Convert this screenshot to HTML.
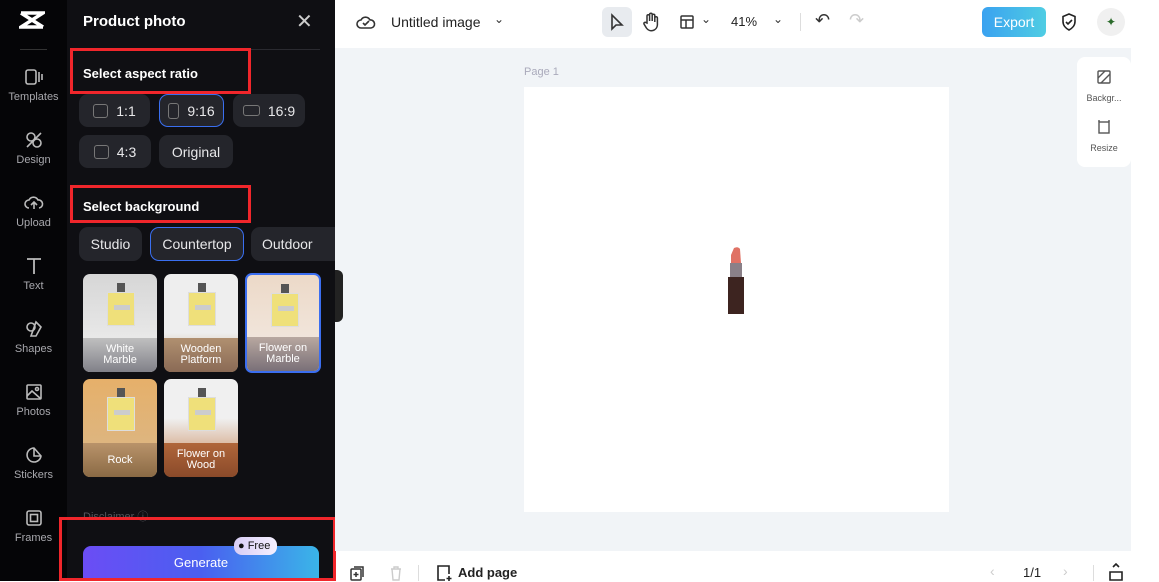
<!DOCTYPE html>
<html><head><style>
*{margin:0;padding:0;box-sizing:border-box}
body{width:1159px;height:581px;overflow:hidden;font-family:"Liberation Sans",sans-serif;background:#fff;position:relative}
.abs{position:absolute}
.rail{left:0;top:0;width:67px;height:581px;background:#050507}
.ri{position:absolute;left:0;width:67px;text-align:center;color:#a8a8ad;font-size:11px}
.ri svg{display:block;margin:0 auto 4px}
.panel{left:67px;top:0;width:268px;height:581px;background:#0f0f13;color:#fff}
.btn{position:absolute;background:#24252b;border-radius:9px;color:#e8e8ea;font-size:14px;display:flex;align-items:center;justify-content:center;gap:8px}
.sel{border:1.5px solid #3a6ff0}
.red{position:absolute;border:3px solid #f0262b}
.th{position:absolute;width:74px;height:98px;border-radius:7px;overflow:hidden}
.th .lbl{position:absolute;bottom:0;left:0;right:0;height:34px;color:#fff;font-size:11px;text-align:center;line-height:11px;display:flex;align-items:center;justify-content:center;background:rgba(120,100,90,.55)}
.bottle{position:absolute;left:24px;top:18px;width:28px;height:34px;background:#efe07a;border:1px solid #ddd;}
.bottle:before{content:"";position:absolute;left:9px;top:-10px;width:8px;height:9px;background:#555}
.bottle:after{content:"";position:absolute;left:6px;top:12px;width:16px;height:5px;background:#ccc}
</style></head><body>
<div class="abs rail">
  <svg class="abs" style="left:19px;top:10px" width="26" height="20" viewBox="0 0 26 20"><path d="M2 3h22L2 17h22M2 3l22 14" stroke="#fff" stroke-width="3.5" fill="none"/></svg>
  <div class="abs" style="left:20px;top:49px;width:27px;height:1px;background:#333"></div>
  <div class="ri" style="top:67px"><svg width="20" height="20" viewBox="0 0 20 20" fill="none" stroke="#bbb" stroke-width="1.6"><rect x="2" y="3" width="10" height="14" rx="2"/><path d="M15 5v10M18 7v6"/></svg>Templates</div>
  <div class="ri" style="top:130px"><svg width="20" height="20" viewBox="0 0 20 20" fill="none" stroke="#bbb" stroke-width="1.6"><circle cx="7" cy="7" r="4"/><circle cx="13" cy="13" r="4"/><path d="M3 17L17 3"/></svg>Design</div>
  <div class="ri" style="top:193px"><svg width="20" height="20" viewBox="0 0 20 20" fill="none" stroke="#bbb" stroke-width="1.6"><path d="M5 15a4 4 0 010-8 5 5 0 019 0 4 4 0 011 8M10 9v7M7 12l3-3 3 3"/></svg>Upload</div>
  <div class="ri" style="top:256px"><svg width="20" height="20" viewBox="0 0 20 20" fill="none" stroke="#bbb" stroke-width="1.8"><path d="M3 3h14M10 3v15"/></svg>Text</div>
  <div class="ri" style="top:319px"><svg width="20" height="20" viewBox="0 0 20 20" fill="none" stroke="#bbb" stroke-width="1.6"><circle cx="7" cy="8" r="4"/><path d="M12 3l5 5-5 9H7z"/></svg>Shapes</div>
  <div class="ri" style="top:382px"><svg width="20" height="20" viewBox="0 0 20 20" fill="none" stroke="#bbb" stroke-width="1.6"><rect x="3" y="3" width="14" height="14" rx="1"/><path d="M3 14l5-5 9 8"/><circle cx="13" cy="7" r="1.5"/></svg>Photos</div>
  <div class="ri" style="top:445px"><svg width="20" height="20" viewBox="0 0 20 20" fill="none" stroke="#bbb" stroke-width="1.6"><path d="M17 11A7 7 0 1110 3l7 8zM10 3v8h7"/></svg>Stickers</div>
  <div class="ri" style="top:508px"><svg width="20" height="20" viewBox="0 0 20 20" fill="none" stroke="#bbb" stroke-width="1.6"><rect x="3" y="3" width="14" height="14" rx="2"/><rect x="6.5" y="6.5" width="7" height="7"/></svg>Frames</div>
</div>
<div class="abs panel">
  <div class="abs" style="left:16px;top:13px;font-size:15px;font-weight:bold">Product photo</div>
  <div class="abs" style="left:229px;top:9px;font-size:20px;color:#ccc">✕</div>
  <div class="abs" style="left:3px;top:49px;width:250px;height:1px;background:#2a2a30"></div>
  <div class="abs" style="left:16px;top:66px;font-size:13px;font-weight:bold">Select aspect ratio</div>
  <div class="btn" style="left:12px;top:94px;width:71px;height:33px"><span style="width:15px;height:14px;border:1.5px solid #777;border-radius:3px"></span>1:1</div>
  <div class="btn sel" style="left:92px;top:94px;width:65px;height:33px"><span style="width:11px;height:16px;border:1.5px solid #777;border-radius:3px"></span>9:16</div>
  <div class="btn" style="left:166px;top:94px;width:72px;height:33px"><span style="width:17px;height:11px;border:1.5px solid #777;border-radius:3px"></span>16:9</div>
  <div class="btn" style="left:12px;top:135px;width:72px;height:33px"><span style="width:15px;height:14px;border:1.5px solid #777;border-radius:3px"></span>4:3</div>
  <div class="btn" style="left:92px;top:135px;width:74px;height:33px">Original</div>
  <div class="abs" style="left:16px;top:199px;font-size:13px;font-weight:bold">Select background</div>
  <div class="btn" style="left:12px;top:227px;width:63px;height:34px">Studio</div>
  <div class="btn sel" style="left:83px;top:227px;width:94px;height:34px">Countertop</div>
  <div class="btn" style="left:184px;top:227px;width:84px;height:34px;justify-content:flex-start;padding-left:11px;border-radius:9px 0 0 9px">Outdoor</div>
  <div class="th" style="left:16px;top:274px;background:linear-gradient(#d6d6d6,#f2f2f2)"><div class="bottle"></div><div class="lbl" style="background:linear-gradient(rgba(150,150,150,.5),#808088)">White<br>Marble</div></div>
  <div class="th" style="left:97px;top:274px;background:linear-gradient(#eee 60%,#c9a67a)"><div class="bottle"></div><div class="lbl" style="background:linear-gradient(#b09070,#8a6a55)">Wooden<br>Platform</div></div>
  <div class="th" style="left:178px;top:273px;width:76px;height:100px;border:2px solid #3b6ef0;background:linear-gradient(#ecd9c8,#f3ebe4)"><div class="bottle"></div><div class="lbl" style="background:linear-gradient(#b8a8a0,#7a7078)">Flower on<br>Marble</div></div>
  <div class="th" style="left:16px;top:379px;background:linear-gradient(#e6b06a,#d9b88a)"><div class="bottle"></div><div class="lbl" style="background:linear-gradient(#b9936a,#8a6a45)">Rock</div></div>
  <div class="th" style="left:97px;top:379px;background:linear-gradient(#f0f0f0 40%,#c27a45)"><div class="bottle"></div><div class="lbl" style="background:linear-gradient(#b0663a,#8a4a2a)">Flower on<br>Wood</div></div>
  <div class="abs" style="left:16px;top:508px;font-size:11px;color:#55555b">Disclaimer ⓘ</div>
  <div class="abs" style="left:16px;top:546px;width:236px;height:35px;border-radius:8px 8px 0 0;background:linear-gradient(90deg,#6b4df5,#4a5ff0 50%,#3ab5e8);font-size:13px;text-align:center;line-height:33px">Generate</div>
  <div class="abs" style="left:167px;top:537px;width:43px;height:18px;border-radius:8px;background:linear-gradient(90deg,#d8cdf5,#f5f0ff);color:#111;font-size:11px;line-height:18px;padding-left:4px">● Free</div>
</div>
<div class="red" style="left:70px;top:48px;width:181px;height:46px"></div>
<div class="red" style="left:70px;top:185px;width:181px;height:38px"></div>
<div class="red" style="left:59px;top:517px;width:277px;height:64px"></div>
<div class="abs" style="left:335px;top:48px;width:796px;height:503px;background:#f1f4f7"></div>
<div class="abs" style="left:335px;top:270px;width:8px;height:52px;background:#222;border-radius:0 6px 6px 0"></div>
<div class="abs" style="left:524px;top:66px;font-size:11px;color:#aab">Page 1</div>
<div class="abs" style="left:524px;top:87px;width:425px;height:425px;background:#fff"></div>
<svg class="abs" style="left:725px;top:245px" width="22" height="70" viewBox="0 0 22 70"><path d="M6 10 L9 3 Q13 1 15 4 L16 18 H6z" fill="#e07265"/><rect x="5" y="18" width="12" height="14" fill="#8a8088"/><rect x="3" y="32" width="16" height="37" fill="#3d2420"/></svg>
<div class="abs" style="left:1077px;top:57px;width:54px;height:110px;background:#fff;border-radius:8px;font-size:9px;color:#555;text-align:center">
  <svg style="margin-top:12px" width="16" height="16" viewBox="0 0 16 16" fill="none" stroke="#555" stroke-width="1.4"><rect x="2" y="2" width="12" height="12" rx="1"/><path d="M2 9l7-7M5 14l9-9"/></svg>
  <div style="margin-top:6px">Backgr...</div>
  <svg style="margin-top:16px" width="16" height="16" viewBox="0 0 16 16" fill="none" stroke="#555" stroke-width="1.4"><rect x="3" y="3" width="10" height="11"/><path d="M3 1v2M13 1v2"/></svg>
  <div style="margin-top:6px">Resize</div>
</div>
<svg class="abs" style="left:356px;top:13px" width="20" height="18" viewBox="0 0 20 18" fill="none" stroke="#333" stroke-width="1.6"><path d="M5 15a4 4 0 010-8 5 5 0 019 0 4 4 0 011 8z"/><path d="M7 10l2 2 4-4"/></svg>
<div class="abs" style="left:391px;top:14px;font-size:14px;color:#222">Untitled image</div>
<div class="abs" style="left:494px;top:12px;font-size:12px;color:#333">⌄</div>
<div class="abs" style="left:602px;top:7px;width:30px;height:30px;background:#e8ebef;border-radius:6px"></div>
<svg class="abs" style="left:609px;top:13px" width="16" height="18" viewBox="0 0 16 18" fill="none" stroke="#333" stroke-width="1.6"><path d="M3 2v14l4-4h6z"/></svg>
<svg class="abs" style="left:642px;top:12px" width="18" height="20" viewBox="0 0 18 20" fill="none" stroke="#333" stroke-width="1.5"><path d="M5 11V4a1.3 1.3 0 012.6 0v5V2.5a1.3 1.3 0 012.6 0V9V3.5a1.3 1.3 0 012.6 0V10V6a1.3 1.3 0 012.6 0v7a6 6 0 01-11 3L2 12a1.3 1.3 0 012.2-1.3z"/></svg>
<svg class="abs" style="left:679px;top:14px" width="16" height="16" viewBox="0 0 16 16" fill="none" stroke="#333" stroke-width="1.5"><rect x="2" y="2" width="12" height="12" rx="1"/><path d="M2 6h12M7 6v8"/></svg>
<div class="abs" style="left:701px;top:12px;font-size:12px;color:#333">⌄</div>
<div class="abs" style="left:731px;top:14px;font-size:13px;color:#222">41%</div>
<div class="abs" style="left:773px;top:12px;font-size:12px;color:#333">⌄</div>
<div class="abs" style="left:800px;top:13px;width:1px;height:18px;background:#ddd"></div>
<div class="abs" style="left:815px;top:10px;font-size:18px;color:#333">↶</div>
<div class="abs" style="left:849px;top:10px;font-size:18px;color:#ccc">↷</div>
<div class="abs" style="left:982px;top:7px;width:64px;height:30px;border-radius:6px;background:linear-gradient(90deg,#3aa2f0,#4fcde3);color:#fff;font-size:14px;text-align:center;line-height:30px">Export</div>
<svg class="abs" style="left:1060px;top:12px" width="18" height="20" viewBox="0 0 18 20" fill="none" stroke="#222" stroke-width="1.6"><path d="M9 2l6 2.5v5c0 4-3 7-6 8.5-3-1.5-6-4.5-6-8.5v-5z"/><path d="M6 10l2 2 4-4"/></svg>
<div class="abs" style="left:1097px;top:8px;width:28px;height:28px;border-radius:50%;background:#f0f0f0;color:#2a6a2a;text-align:center;line-height:28px;font-size:12px">✦</div>
<svg class="abs" style="left:349px;top:565px" width="16" height="16" viewBox="0 0 16 16" fill="none" stroke="#333" stroke-width="1.5"><rect x="2" y="4" width="10" height="11" rx="1"/><path d="M5 2h9v10M7 7v5M4.5 9.5h5"/></svg>
<svg class="abs" style="left:389px;top:565px" width="14" height="16" viewBox="0 0 14 16" fill="none" stroke="#ccc" stroke-width="1.4"><path d="M2 4h10M5 4V2h4v2M3 4l1 11h6l1-11"/></svg>
<div class="abs" style="left:418px;top:565px;width:1px;height:16px;background:#ddd"></div>
<svg class="abs" style="left:435px;top:564px" width="18" height="18" viewBox="0 0 18 18" fill="none" stroke="#222" stroke-width="1.6"><path d="M10 16H3V2h11v8M14 12v5M11.5 14.5h5"/></svg>
<div class="abs" style="left:458px;top:565px;font-size:13px;color:#222;font-weight:bold">Add page</div>
<div class="abs" style="left:990px;top:563px;font-size:14px;color:#ccc">‹</div>
<div class="abs" style="left:1023px;top:565px;font-size:13px;color:#222">1/1</div>
<div class="abs" style="left:1063px;top:563px;font-size:14px;color:#ccc">›</div>
<div class="abs" style="left:1093px;top:565px;width:1px;height:16px;background:#ddd"></div>
<svg class="abs" style="left:1108px;top:563px" width="16" height="18" viewBox="0 0 16 18" fill="none" stroke="#222" stroke-width="1.6"><path d="M5 4l3-3 3 3M2 9h12v8H2z"/></svg>
</body></html>
